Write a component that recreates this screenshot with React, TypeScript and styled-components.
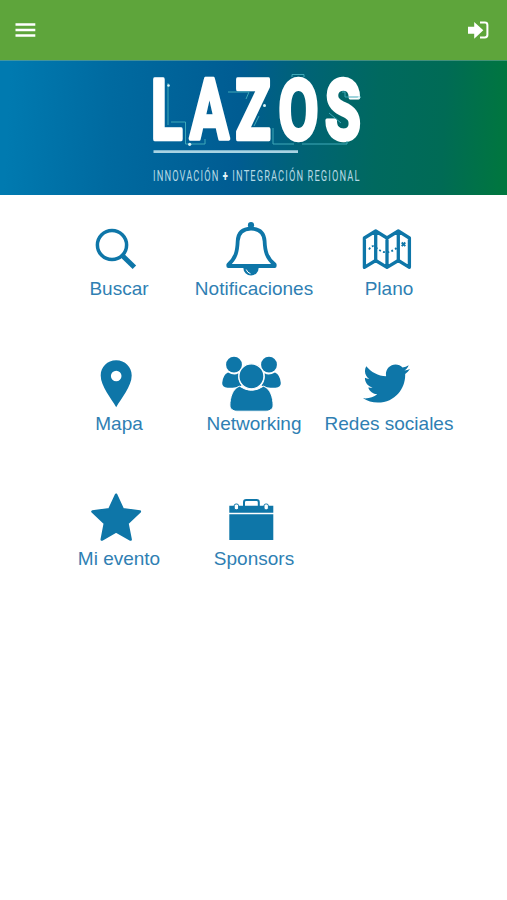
import React from "react";
import styled, { createGlobalStyle } from "styled-components";
import { FaTwitter } from "react-icons/fa";

const GlobalStyle = createGlobalStyle`
  body { margin: 0; background: #fff; font-family: "Liberation Sans", Arial, sans-serif; }
  svg { display: block; }
`;

const Screen = styled.div`
  min-height: 100vh;
  background: #fff;
`;

const TopBar = styled.header`
  height: 60px;
  box-sizing: border-box;
  padding: 0 18px 0 15px;
  display: flex;
  align-items: center;
  justify-content: space-between;
  background: #5ea53b;
  color: #fff;
`;

const BarButton = styled.button`
  padding: 0;
  border: 0;
  background: none;
  color: inherit;
`;

const Banner = styled.section`
  height: 135px;
  padding-left: 6px;
  box-sizing: border-box;
  background: linear-gradient(93deg, #007ab0 2%, #006aa0 22%, #005c92 47%, #006375 60%, #00695f 74%, #006b55 87%, #00763f 99%);
  box-shadow: inset 0 1px 0 rgba(110, 170, 150, 0.6);
`;

const Logo = styled.svg`
  margin: 0 auto;
  overflow: visible;
`;

const Title = styled.text`
  font-family: Roboto, sans-serif;
  font-weight: 700;
  font-size: 84px;
  fill: #fff;
  stroke: #fff;
  stroke-width: 4.4px;
  stroke-linejoin: round;
`;

const Tagline = styled.text`
  font-family: Roboto, sans-serif;
  font-weight: 400;
  font-size: 15px;
  letter-spacing: 1.8px;
  fill: #b5d9e4;
`;

const Plus = styled.tspan`
  font-weight: 900;
  fill: #e4f4f8;
`;

const Menu = styled.main`
  display: grid;
  grid-template-columns: repeat(3, 135px);
  grid-auto-rows: 135px;
  justify-content: center;
`;

const Tile = styled.a`
  display: flex;
  flex-direction: column;
  align-items: center;
  padding-top: 25px;
  color: #0e76a8;
  text-decoration: none;
`;

const IconBox = styled.div`
  width: 60px;
  height: 60px;
  margin-right: 5px;
`;

const BirdBox = styled.div`
  padding: 5px 6px 5px 7px;
`;

const Label = styled.span`
  margin: -2px 0 0 1px;
  font-size: 19px;
  line-height: 22px;
  white-space: nowrap;
  color: #2f7fb3;
`;

const Icon = ({ children }: { children: React.ReactNode }) => (
  <svg width="60" height="60" viewBox="0 0 60 60" fill="currentColor">
    {children}
  </svg>
);

const SearchIcon = () => (
  <Icon>
    <circle cx="26" cy="25" r="14.6" fill="none" stroke="currentColor" strokeWidth="3.5" />
    <path d="M36 35.3 48.4 47.3" stroke="currentColor" strokeWidth="5" />
  </Icon>
);

const BellIcon = () => (
  <Icon>
    <circle cx="30" cy="5.2" r="3.1" />
    <path
      d="M30 8.7C21.5 8.7 17.2 13 16.7 21C16.3 31 15 38 7.3 44.6V46H53.7V44.6C45.5 38 44 31 43.6 21C43 13 38.5 8.7 30 8.7Z"
      fill="none"
      stroke="currentColor"
      strokeWidth="3.8"
      strokeLinejoin="round"
    />
    <path d="M22.3 47.5H37.7A7.7 8 0 0 1 22.3 47.5Z" />
    <path d="M25.2 49.5Q26.4 52.8 29.5 53.7" fill="none" stroke="#fff" strokeWidth="1" />
  </Icon>
);

const PlanIcon = () => (
  <Icon>
    <path
      d="M8.4 18 19.7 11 31 18 42.3 11 53.4 18V47.3L42.3 40.5 31 47.3 19.7 40.5 8.4 47.3ZM19.7 11V40.5M31 18V47.3M42.3 11V40.5"
      fill="none"
      stroke="currentColor"
      strokeWidth="3.3"
      strokeLinejoin="round"
    />
    <path
      d="M13 29.5Q15.5 24.5 19.5 27Q25 32.5 31 32.3Q38 31 41 27.5"
      fill="none"
      stroke="currentColor"
      strokeWidth="1.8"
      strokeDasharray="2 2.2"
    />
    <path d="m45.7 22.5 3.6 3.6m0-3.6-3.6 3.6" stroke="currentColor" strokeWidth="1.9" />
  </Icon>
);

const PinIcon = () => (
  <Icon>
    <path
      fillRule="evenodd"
      d="M30.2 5.3C21.3 5.3 14.7 12 14.7 20.5C14.7 31.5 25.5 43.5 30.2 52.3C35 43.5 45.7 31.5 45.7 20.5C45.7 12 39 5.3 30.2 5.3ZM30.2 15.7A5.3 5.3 0 1 1 30.2 26.3A5.3 5.3 0 1 1 30.2 15.7Z"
    />
  </Icon>
);

const PeopleIcon = () => (
  <Icon>
    <circle cx="13" cy="9.7" r="7.9" />
    <circle cx="48" cy="9.7" r="7.9" />
    <path d="M7 17.5Q13 21 17.5 18.3Q16.2 25.5 20.5 30.5Q15.5 33 6.5 32.8Q1 32 1.2 28Q1.8 20 7 17.5Z" />
    <path d="M54 17.5Q48 21 43.5 18.3Q44.8 25.5 40.5 30.5Q45.5 33 54.5 32.8Q60 32 59.8 28Q59.2 20 54 17.5Z" />
    <path
      d="M18.5 31.2Q30.5 39.5 42.5 31.2C49.5 33.5 52 43 52.1 50C52.1 54 49 56.2 45 56.2H16C12 56.2 8.9 54 8.9 50C9 43 11.5 33.5 18.5 31.2Z"
      stroke="#fff"
      strokeWidth="1"
    />
    <circle cx="30.4" cy="21.3" r="12.5" stroke="#fff" strokeWidth="1.2" />
  </Icon>
);

const StarIcon = () => (
  <Icon>
    <path
      d="M30.1 4.8 36.8 19.2 53.8 21.6 41.4 33.2 44.6 49.5 30.1 41.4 15.8 49.5 18.9 33.2 6.5 21.6 23.4 19.2Z"
      stroke="currentColor"
      strokeWidth="2.6"
      strokeLinejoin="round"
    />
  </Icon>
);

const BriefcaseIcon = () => (
  <Icon>
    <path d="M8.3 24.3H52.3V50H8.3ZM8.3 15.8H52.3V22.8H8.3Z" />
    <path
      d="M23 17V12.2Q23 10 25.2 10H35.6Q37.8 10 37.8 12.2V17"
      fill="none"
      stroke="currentColor"
      strokeWidth="2"
    />
    <g fill="#fff" stroke="currentColor" strokeWidth="1">
      <rect x="13.2" y="14" width="4.4" height="5.8" rx="1.8" />
      <rect x="43" y="14" width="4.4" height="5.8" rx="1.8" />
    </g>
  </Icon>
);

const BirdIcon = () => (
  <BirdBox>
    <FaTwitter size={47} />
  </BirdBox>
);

const tiles = [
  { label: "Buscar", Glyph: SearchIcon },
  { label: "Notificaciones", Glyph: BellIcon },
  { label: "Plano", Glyph: PlanIcon },
  { label: "Mapa", Glyph: PinIcon },
  { label: "Networking", Glyph: PeopleIcon },
  { label: "Redes sociales", Glyph: BirdIcon },
  { label: "Mi evento", Glyph: StarIcon },
  { label: "Sponsors", Glyph: BriefcaseIcon },
];

const LazosLogo = () => (
  <Logo width="220" height="135" viewBox="0 0 220 135">
    <Title transform="scale(.69 1)" y="79.5" x="5.9 62.5 128.3 190.5 258">
      LAZOS
    </Title>
    <g fill="none" stroke="#3fa9b8" strokeWidth="1">
      <path d="M21 23V65M24 62H38.5V84H58V79" />
      <path d="M81 32H102L99 39M112 56 107 66M126 68V84H147" />
      <path d="M145 17V14.5H157V17M155 84H200V81" />
      <path d="M195 32H198V37H214M182 53 194 63" />
    </g>
    <g fill="#d9f2f5">
      <circle cx="21.5" cy="25.5" r="1.3" />
      <circle cx="42.7" cy="84.3" r="1.6" />
      <circle cx="117.5" cy="45.5" r="1.5" />
      <circle cx="212" cy="37.5" r="1.2" />
    </g>
    <path d="M6.5 91.7H151" stroke="#a9d3e3" strokeWidth="2.7" />
    <Tagline transform="scale(.62 1)" x="9.7" y="121">
      INNOVACIÓN <Plus>+</Plus> INTEGRACIÓN REGIONAL
    </Tagline>
  </Logo>
);

export default function App() {
  return (
    <Screen>
      <GlobalStyle />
      <TopBar>
        <BarButton aria-label="Menú">
          <svg width="21" height="16" viewBox="0 0 21 16">
            <path d="M.5 2.6H20.3M.5 8H20.3M.5 13.4H20.3" stroke="currentColor" strokeWidth="2.5" />
          </svg>
        </BarButton>
        <BarButton aria-label="Ingresar">
          <svg width="21" height="18" viewBox="0 0 21 18">
            <path d="M0 5.7H6.2V.9L15.3 9.3 6.2 17.7V12.7H0Z" fill="currentColor" />
            <path d="M12 1.6H16.8Q19.4 1.6 19.4 4V14Q19.4 16.4 16.8 16.4H12" fill="none" stroke="currentColor" strokeWidth="2" />
          </svg>
        </BarButton>
      </TopBar>
      <Banner>
        <LazosLogo />
      </Banner>
      <Menu>
        {tiles.map(({ label, Glyph }) => (
          <Tile key={label}>
            <IconBox>
              <Glyph />
            </IconBox>
            <Label>{label}</Label>
          </Tile>
        ))}
      </Menu>
    </Screen>
  );
}
